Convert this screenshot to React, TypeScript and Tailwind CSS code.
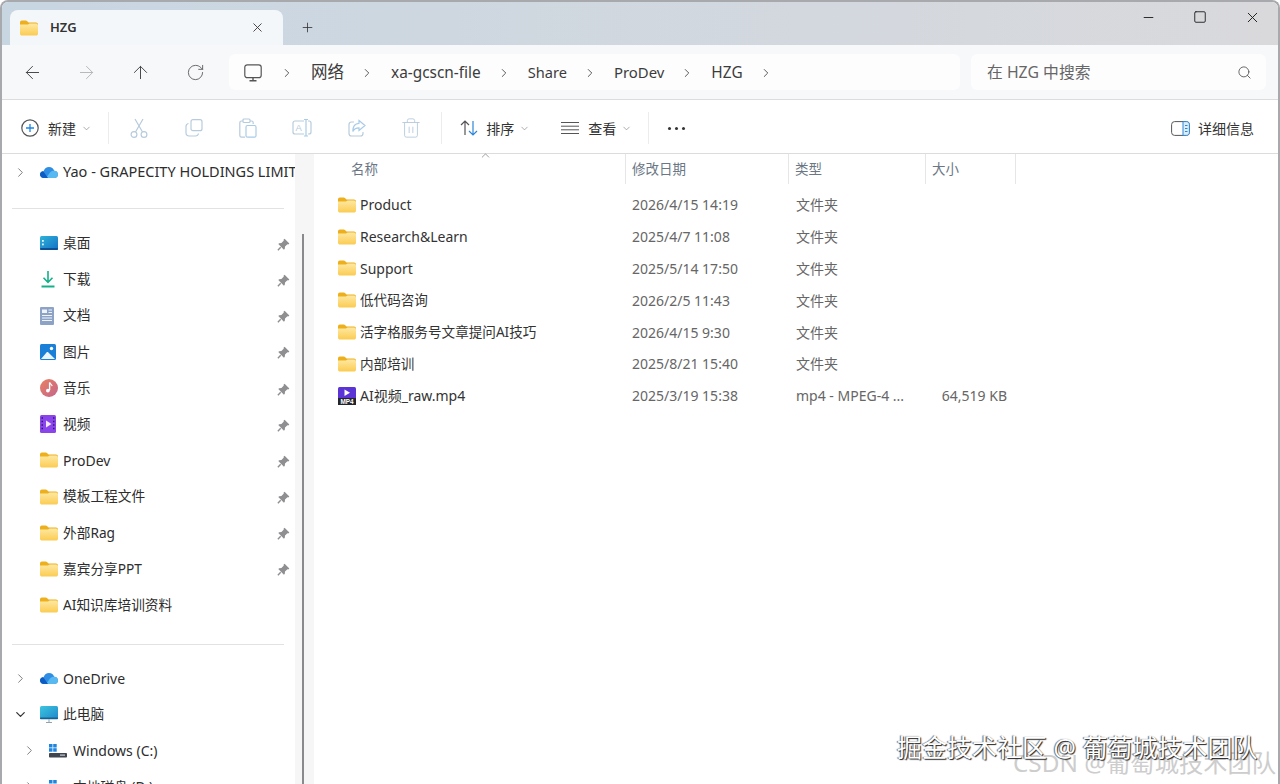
import { ArrowLeft, ArrowRight, ArrowUp, ChevronDown, ChevronRight, ChevronUp, Minus, Plus, RotateCw, Search, Square, Trash2, X } from "lucide-react"

const font = { fontFamily: '"Noto Sans", "Noto Sans CJK SC", sans-serif' }

function Folder({ className = "w-[18px] h-[16px]" }: { className?: string }) {
  return (
    <svg viewBox="0 0 18 16" className={className}>
      <defs>
        <linearGradient id="fold" x1="0" y1="0" x2="0" y2="1">
          <stop offset="0" stopColor="#fee9a4" />
          <stop offset="1" stopColor="#fbcb50" />
        </linearGradient>
      </defs>
      <path d="M0 2.500C0 1.400.8.600 1.800.600h4c.6 0 1 .2 1.400.6L8.600 2.600H16c1.100 0 2 .9 2 2V6H0z" fill="#edb01c" />
      <path d="M0 4.600h7.200c.5 0 .8-.1 1.200-.4L9.600 3.400H16c1.100 0 2 .9 2 2v8.400c0 1.100-.9 1.800-2 1.800H2c-1.100 0-2-.7-2-1.800z" fill="url(#fold)" />
    </svg>
  )
}

function Cloud() {
  return (
    <svg viewBox="0 0 18 12" className="w-[18px] h-[12px]">
      <path d="M4 12C1.500 12 0 10.400 0 8.500S1.500 5.200 3.500 5.200C4.500 2.500 6.500 1 9 1c2.700 0 4.500 1.500 5.200 3.800 2.200.1 3.800 1.600 3.800 3.600S16.500 12 14.500 12z" fill="#2f8de4" />
      <path d="M6 12 10 6.500c1-1.200 2.500-1.900 4.200-1.700 2.200.1 3.800 1.600 3.800 3.600S16.500 12 14.500 12z" fill="#58b8f0" />
      <path d="M0 8.500C0 10.400 1.500 12 4 12h4L4 6.200c-.6-.6-1-1-1-1C1.200 5.400 0 6.800 0 8.500z" fill="#0c5cc4" />
    </svg>
  )
}

function Desktop() {
  return (
    <svg viewBox="0 0 18 14" className="w-[18px] h-[14px]">
      <defs>
        <linearGradient id="desk" x1="0" y1="0" x2="1" y2="1">
          <stop offset="0" stopColor="#2fb3d9" />
          <stop offset="1" stopColor="#1470c4" />
        </linearGradient>
      </defs>
      <rect width="18" height="14" rx="1.500" fill="url(#desk)" />
      <rect x="2" y="4" width="1.800" height="1.800" fill="#dff4fb" />
      <rect x="2" y="7.500" width="1.800" height="1.800" fill="#dff4fb" />
      <rect y="12" width="18" height="2" rx="1" fill="#0e4f93" />
    </svg>
  )
}

function Download() {
  return (
    <svg viewBox="0 0 16 18" className="w-[16px] h-[18px]" fill="none" stroke="#14b089" strokeWidth="1.600">
      <path d="M8 1v11M3.500 7.800 8 12.300l4.500-4.500" />
      <path d="M1.500 16.500h13" strokeWidth="2" />
    </svg>
  )
}

function Docs() {
  return (
    <svg viewBox="0 0 14 18" className="w-[14px] h-[18px]">
      <rect width="14" height="18" rx="1" fill="#8ca3c6" />
      <rect x="2" y="2.500" width="5" height="3.500" fill="#f0f4fa" />
      <path d="M8.500 3h3.500M8.500 5.500h3.500M2 8.500h10M2 11h10M2 13.500h10" stroke="#f0f4fa" strokeWidth="1.100" />
    </svg>
  )
}

function Pictures() {
  return (
    <svg viewBox="0 0 16 16" className="w-[16px] h-[16px]">
      <rect width="16" height="16" rx="1.500" fill="#1a7fd6" />
      <circle cx="11.500" cy="4.500" r="1.700" fill="#fff" />
      <path d="M1 15 6.500 8.500c.6-.6 1.300-.6 1.900 0L15 15z" fill="#eaf5fd" />
    </svg>
  )
}

function Music() {
  return (
    <svg viewBox="0 0 18 18" className="w-[18px] h-[18px]">
      <defs>
        <linearGradient id="mus" x1="0" y1="0" x2="1" y2="1">
          <stop offset="0" stopColor="#e98060" />
          <stop offset="1" stopColor="#c4668c" />
        </linearGradient>
      </defs>
      <circle cx="9" cy="9" r="9" fill="url(#mus)" />
      <path d="M9.600 3.500v7.600" stroke="#fff" strokeWidth="1.400" />
      <path d="M9.600 3.500c.5 1.700 2.400 1.800 2.500 3.600" stroke="#fff" strokeWidth="1.200" fill="none" />
      <circle cx="7.900" cy="11.600" r="1.900" fill="#fff" />
    </svg>
  )
}

function Video() {
  return (
    <svg viewBox="0 0 16 18" className="w-[16px] h-[18px]">
      <rect width="16" height="18" rx="1.500" fill="#8a45ea" />
      <path d="M6 5.500v7l5.500-3.500z" fill="#f2e8ff" />
      <path d="M1.500 3h1.500M1.500 6.500h1.500M1.500 10h1.500M1.500 13.500h1.500M13 3h1.500M13 6.500h1.500M13 10h1.500M13 13.500h1.500" stroke="#2e1a6e" strokeWidth="1.500" />
    </svg>
  )
}

function ThisPc() {
  return (
    <svg viewBox="0 0 18 17" className="w-[18px] h-[17px]">
      <defs>
        <linearGradient id="pc" x1="0" y1="0" x2="1" y2="1">
          <stop offset="0" stopColor="#3cc6de" />
          <stop offset="1" stopColor="#1f88cc" />
        </linearGradient>
      </defs>
      <rect width="18" height="13" rx="1.500" fill="url(#pc)" />
      <rect y="11.500" width="18" height="1.800" rx=".8" fill="#14628f" />
      <path d="M9 13.300v3M6 16.500h6" stroke="#8ea3b3" strokeWidth="1" />
    </svg>
  )
}

function Drive() {
  return (
    <svg viewBox="0 0 18 14" className="w-[18px] h-[14px]">
      <rect width="3.500" height="3.500" fill="#1f86e0" />
      <rect x="4.200" width="3.500" height="3.500" fill="#1f86e0" />
      <rect y="4.200" width="3.500" height="3.500" fill="#1f86e0" />
      <rect x="4.200" y="4.200" width="3.500" height="3.500" fill="#1f86e0" />
      <rect y="9" width="18" height="4.500" rx=".8" fill="#3f4650" />
      <rect x="11" y="10.500" width="5" height="1.200" fill="#c8ccd0" />
    </svg>
  )
}

function Mp4() {
  return (
    <svg viewBox="0 0 18 18" className="w-[18px] h-[18px]">
      <rect width="18" height="18" rx="1.500" fill="#5b34d6" />
      <path d="M6.500 2.500v6.500l5.500-3.250z" fill="#fff" />
      <rect y="11" width="18" height="7" fill="#23252b" />
      <text x="9" y="16.800" textAnchor="middle" fontSize="6.400" fontWeight="700" fill="#fff" fontFamily="Liberation Sans, sans-serif">MP4</text>
    </svg>
  )
}

function Pin() {
  return (
    <svg viewBox="0 0 12 12" className="w-[13px] h-[13px]">
      <path d="M7 .6 11.400 5 10.400 6 9.600 5.700 7.400 7.900 7.200 10 6.400 10.800 1.200 5.600 2 4.800 4.100 4.600 6.300 2.400 6 1.600z" fill="#8f8f92" />
      <path d="M3.400 8.600.8 11.200" stroke="#8f8f92" strokeWidth="1.300" />
    </svg>
  )
}

const pale = "#b7cbdc"

function CutIcon() {
  return (
    <svg viewBox="0 0 18 20" className="w-[18px] h-[20px]" fill="none" stroke={pale} strokeWidth="1.200">
      <circle cx="4" cy="16.500" r="2.900" />
      <circle cx="14" cy="16.500" r="2.900" />
      <path d="M5.500 14 13 1M12.500 14 5 1" />
    </svg>
  )
}

function CopyIcon() {
  return (
    <svg viewBox="0 0 18 18" className="w-[18px] h-[18px]" fill="none" stroke={pale} strokeWidth="1.200">
      <rect x="6" y=".7" width="11" height="11" rx="2" />
      <path d="M3.500 4.500C2 4.800 1 6 1 7.500v6.300C1 15.600 2.400 17 4.200 17h6.300c1.500 0 2.700-1 3-2.500" />
    </svg>
  )
}

function PasteIcon() {
  return (
    <svg viewBox="0 0 18 20" className="w-[18px] h-[20px]" fill="none" stroke={pale} strokeWidth="1.200">
      <path d="M4 3H2.500C1.500 3 .8 3.800.8 4.800v12.500c0 1 .7 1.900 1.700 1.900H6" />
      <path d="M11 3h1.500c1 0 1.700.8 1.700 1.800V6" />
      <rect x="4" y="1" width="7" height="3.500" rx="1" />
      <rect x="7" y="7.500" width="10" height="11.700" rx="1.500" stroke="#a8cbe8" />
    </svg>
  )
}

function RenameIcon() {
  return (
    <svg viewBox="0 0 20 18" className="w-[20px] h-[18px]" fill="none" stroke={pale} strokeWidth="1.200">
      <path d="M12 2H3C1.800 2 1 2.800 1 4v9c0 1.200.8 2 2 2h9" />
      <path d="M16 2h1c1.200 0 2 .8 2 2v9c0 1.200-.8 2-2 2h-1" />
      <path d="M14 .5v16.500M12 .5h4M12 17h4" stroke="#a8cbe8" />
      <text x="3.500" y="12" fontSize="9.500" fill={pale} stroke="none" fontFamily="Liberation Sans, sans-serif">A</text>
    </svg>
  )
}

function ShareIcon() {
  return (
    <svg viewBox="0 0 18 18" className="w-[18px] h-[18px]" fill="none" stroke={pale} strokeWidth="1.200">
      <path d="M6 3H3.500C2 3 1 4 1 5.500v9C1 16 2 17 3.500 17h9c1.500 0 2.500-1 2.500-2.500V13" />
      <path d="M11 1.500 17 6.500 11 11.500V8.800C8 8.800 6 10 4.800 12.500 4.800 8 7 4.500 11 4.300z" stroke="#a8cbe8" />
    </svg>
  )
}

function SortIcon() {
  return (
    <svg viewBox="0 0 18 16" className="w-[18px] h-[16px]" fill="none" strokeWidth="1.200">
      <path d="M5 15V1M1 5l4-4 4 4" stroke="#555" />
      <path d="M13 1v14M9 11l4 4 4-4" stroke="#2e86d6" />
    </svg>
  )
}

function ViewIcon() {
  return (
    <svg viewBox="0 0 18 12" className="w-[18px] h-[12px]" stroke="#555" strokeWidth="1">
      <path d="M0 .5h18M0 4.200h18M0 7.800h18M0 11.500h18" />
    </svg>
  )
}

function DetailsIcon() {
  return (
    <svg viewBox="0 0 19 15" className="w-[19px] h-[15px]" fill="none">
      <rect x=".6" y=".6" width="17.800" height="13.800" rx="3" stroke="#555" />
      <path d="M12 .6h3.400c1.700 0 3 1.300 3 3v7.800c0 1.700-1.300 3-3 3H12z" fill="#dcedfa" stroke="#2e86d6" />
      <path d="M14 4.500h2.500M14 7.500h2.500M14 10.500h2.500" stroke="#2e86d6" />
    </svg>
  )
}

function MonitorIcon() {
  return (
    <svg viewBox="0 0 18 18" className="w-[18px] h-[18px]" fill="none" stroke="#555" strokeWidth="1.200">
      <rect x=".8" y=".8" width="16.400" height="12.900" rx="2.500" />
      <path d="M9 13.700v2.800M5.500 16.800h7" strokeWidth="1.400" />
    </svg>
  )
}

function Crumb({ label, className }: { label: string; className: string }) {
  return (
    <>
      <span className={className}>{label}</span>
      <ChevronRight size={14} strokeWidth={1.500} className="text-[#444] ml-[16px] mr-[17px]" />
    </>
  )
}

function ToolBtn({ children }: { children: React.ReactNode }) {
  return <div className="w-[54.400px] flex justify-center items-center">{children}</div>
}

const hasCjk = (s: string) => /[\u4e00-\u9fff]/.test(s)

function NavRow({ icon, label, pin, chevron, down, indent }: { icon: React.ReactNode; label: string; pin?: boolean; chevron?: boolean; down?: boolean; indent?: boolean }) {
  return (
    <div className={`h-[36.200px] flex items-center text-[#2d2d2d] whitespace-nowrap overflow-hidden ${indent ? "pl-[9px]" : ""} ${hasCjk(label) ? "text-[13.700px]" : "text-[14px]"}`}>
      <div className="w-[38px] h-full flex items-center justify-center shrink-0 pr-[2px]">
        {chevron && !down && <ChevronRight size={15} strokeWidth={1.500} className="text-[#777]" />}
        {down && <ChevronDown size={15} strokeWidth={2} className="text-[#333]" />}
      </div>
      <div className={`flex justify-start shrink-0 ${indent ? "w-[24px]" : "w-[23px]"}`}>{icon}</div>
      <span className={`flex-1 overflow-hidden ${label.startsWith("Yao") ? "text-[14.500px]" : ""}`}>{label}</span>
      {pin && <div className="w-[28px] shrink-0 flex justify-start pl-[10px] pt-[2px]"><Pin /></div>}
    </div>
  )
}

const pinned: [React.ReactNode, string, boolean][] = [
  [<Desktop />, "桌面", true],
  [<Download />, "下载", true],
  [<Docs />, "文档", true],
  [<Pictures />, "图片", true],
  [<Music />, "音乐", true],
  [<Video />, "视频", true],
  [<Folder />, "ProDev", true],
  [<Folder />, "模板工程文件", true],
  [<Folder />, "外部Rag", true],
  [<Folder />, "嘉宾分享PPT", true],
  [<Folder />, "AI知识库培训资料", false],
]

const files = [
  ["Product", "2026/4/15 14:19", "文件夹", ""],
  ["Research&Learn", "2025/4/7 11:08", "文件夹", ""],
  ["Support", "2025/5/14 17:50", "文件夹", ""],
  ["低代码咨询", "2026/2/5 11:43", "文件夹", ""],
  ["活字格服务号文章提问AI技巧", "2026/4/15 9:30", "文件夹", ""],
  ["内部培训", "2025/8/21 15:40", "文件夹", ""],
  ["AI视频_raw.mp4", "2025/3/19 15:38", "mp4 - MPEG-4 ...", "64,519 KB"],
]

export default function App() {
  return (
    <div className="relative w-[1280px] h-[784px] overflow-hidden bg-white" style={font}>
      <div className="w-full h-full flex flex-col border-t-2 border-x-2 border-[#a8a9ad] rounded-t-[8px] overflow-hidden">
        {/* title bar */}
        <div className="h-[43px] shrink-0 flex bg-gradient-to-r from-[#c8d6e2] to-[#d9d9dc] pl-[8px]">
          <div className="mt-[8px] w-[273px] h-[35px] bg-[#f4f7fa] rounded-t-[8px] flex items-center pl-[10px] pr-[18px]">
            <Folder />
            <span className="ml-[12px] flex-1 text-[13px] font-semibold text-[#333]">HZG</span>
            <X size={15} strokeWidth={1.400} className="text-[#333]" />
          </div>
          <div className="ml-[17px] mt-[8px] h-[35px] flex items-center">
            <Plus size={15} strokeWidth={1.300} className="text-[#333]" />
          </div>
          <div className="flex-1" />
          <div className="flex items-center h-[30px] pr-[1px] text-[#222] ml-[-1px]">
            <div className="w-[52px] flex justify-center translate-x-[1px]"><Minus size={15} strokeWidth={1.500} /></div>
            <div className="w-[52px] flex justify-center translate-x-[1px]"><Square size={14} strokeWidth={1.600} /></div>
            <div className="w-[52px] flex justify-center translate-x-[1px]"><X size={17} strokeWidth={1.400} /></div>
          </div>
        </div>
        {/* address bar */}
        <div className="h-[55px] shrink-0 flex items-center bg-[#f6f8fa] border-b border-[#dcdcdc] pl-[3px] pr-[12px]">
          <div className="w-[54.500px] flex justify-center"><ArrowLeft size={21} strokeWidth={1.100} className="text-[#444]" /></div>
          <div className="w-[54.500px] flex justify-center"><ArrowRight size={21} strokeWidth={1.100} className="text-[#b4b6b8]" /></div>
          <div className="w-[54.500px] flex justify-center pr-[1px]"><ArrowUp size={21} strokeWidth={1.100} className="text-[#444]" /></div>
          <div className="w-[54.500px] flex justify-center"><RotateCw size={19} strokeWidth={1.100} className="text-[#555]" /></div>
          <div className="ml-[6px] w-[731px] h-[36px] pt-[1px] bg-[#fdfdfe] rounded-[6px] flex items-center pl-[15px] text-[#3c3c3c]">
            <MonitorIcon />
            <ChevronRight size={14} strokeWidth={1.500} className="text-[#444] ml-[18px] mr-[17px]" />
            <Crumb label="网络" className="text-[16.500px]" />
            <Crumb label="xa-gcscn-file" className="text-[15.400px]" />
            <Crumb label="Share" className="text-[14.600px]" />
            <Crumb label="ProDev" className="text-[14.900px]" />
            <Crumb label="HZG" className="text-[15.400px]" />
          </div>
          <div className="ml-[11px] flex-1 h-[36px] pt-[1px] bg-[#fdfdfe] rounded-[6px] flex items-center justify-between pl-[16px] pr-[14px] text-[15.800px] text-[#666]">
            <span>在 HZG 中搜索</span>
            <Search size={15} strokeWidth={1.400} className="text-[#555]" />
          </div>
        </div>
        {/* command bar */}
        <div className="h-[54px] shrink-0 flex items-center bg-white border-b border-[#dcdcdc] text-[14px] text-[#333] pl-[19px] pr-[24px] pt-[3px]">
          <svg viewBox="0 0 18 18" className="w-[18px] h-[18px]" fill="none">
            <circle cx="9" cy="9" r="8.200" stroke="#555" strokeWidth="1.200" />
            <path d="M9 5v8M5 9h8" stroke="#1f86e0" strokeWidth="1.300" />
          </svg>
          <span className="ml-[9px]">新建</span>
          <ChevronDown size={11} strokeWidth={1.500} className="ml-[5px] text-[#888]" />
          <div className="ml-[16px] w-px h-[32px] bg-[#ececec]" />
          <div className="flex ml-[3px]">
            <ToolBtn><CutIcon /></ToolBtn>
            <ToolBtn><CopyIcon /></ToolBtn>
            <ToolBtn><PasteIcon /></ToolBtn>
            <ToolBtn><RenameIcon /></ToolBtn>
            <ToolBtn><ShareIcon /></ToolBtn>
            <ToolBtn><Trash2 size={22} strokeWidth={1} className="text-[#b7cbdc]" /></ToolBtn>
          </div>
          <div className="ml-[3px] w-px h-[32px] bg-[#ececec]" />
          <div className="ml-[18px]"><SortIcon /></div>
          <span className="ml-[8px]">排序</span>
          <ChevronDown size={11} strokeWidth={1.500} className="ml-[5px] text-[#888]" />
          <div className="ml-[31px]"><ViewIcon /></div>
          <span className="ml-[9px]">查看</span>
          <ChevronDown size={11} strokeWidth={1.500} className="ml-[5px] text-[#888]" />
          <div className="ml-[16px] w-px h-[32px] bg-[#ececec]" />
          <div className="ml-[19px] flex gap-[4px]">
            <div className="w-[3px] h-[3px] rounded-full bg-[#333]" />
            <div className="w-[3px] h-[3px] rounded-full bg-[#333]" />
            <div className="w-[3px] h-[3px] rounded-full bg-[#333]" />
          </div>
          <div className="flex-1" />
          <DetailsIcon />
          <span className="ml-[8px]">详细信息</span>
        </div>
        {/* body */}
        <div className="flex-1 flex min-h-0">
          <div className="w-[293px] shrink-0 overflow-hidden">
            <NavRow chevron icon={<Cloud />} label="Yao - GRAPECITY HOLDINGS LIMITED" />
            <div className="h-[35px] flex items-center pl-[10px] pt-[2px]"><div className="w-[272px] h-px bg-[#e2e2e2]" /></div>
            {pinned.map(([icon, label, pin]) => (
              <NavRow key={label} icon={icon} label={label} pin={pin} />
            ))}
            <div className="h-[37px] flex items-center pl-[10px] pt-[5px]"><div className="w-[272px] h-px bg-[#e2e2e2]" /></div>
            <NavRow chevron icon={<Cloud />} label="OneDrive" />
            <NavRow chevron down icon={<ThisPc />} label="此电脑" />
            <NavRow chevron indent icon={<Drive />} label="Windows (C:)" />
            <NavRow chevron indent icon={<Drive />} label="本地磁盘 (D:)" />
          </div>
          <div className="w-[19px] shrink-0 bg-[#f6f6f6] pl-[7px]">
            <div className="mt-[80px] w-[2px] h-[600px] bg-[#8a8a8c]" />
          </div>
          <div className="flex-1 min-w-0">
            <div className="relative h-[35px] flex items-start text-[13.500px] text-[#6b7785]">
              <ChevronUp size={13} strokeWidth={1.300} className="absolute left-[165px] top-[-5px] text-[#777]" />
              <div className="w-[312px] h-[30px] pl-[37px] flex items-center border-r border-[#e6e6e6]">名称</div>
              <div className="w-[163px] h-[30px] pl-[6px] flex items-center border-r border-[#e6e6e6]">修改日期</div>
              <div className="w-[137px] h-[30px] pl-[6px] flex items-center border-r border-[#e6e6e6]">类型</div>
              <div className="w-[90px] h-[30px] pl-[6px] flex items-center border-r border-[#e6e6e6]">大小</div>
            </div>
            {files.map(([name, date, type, size], i) => (
              <div key={name} className="h-[31.800px] flex items-center text-[14px]">
                <div className="w-[312px] pl-[24px] flex items-center gap-[4px] text-[#333]">
                  {i === 6 ? <Mp4 /> : <Folder />}
                  <span className={hasCjk(name) && i !== 6 ? "text-[13.600px]" : ""}>{name}</span>
                </div>
                <div className="w-[163px] pl-[6px] text-[#666]">{date}</div>
                <div className="w-[137px] pl-[7px] text-[#666]">{type}</div>
                <div className="w-[81px] text-right text-[#666]">{size}</div>
              </div>
            ))}
          </div>
        </div>
      </div>
      {/* watermarks */}
      <div className="absolute left-[1013px] top-[749px] text-[24.300px] leading-[28px] text-[#cdcdcd] whitespace-nowrap">CSDN @葡萄城技术团队</div>
      <div className="absolute left-[897px] top-[732px] text-[25px] leading-[30px] text-white whitespace-nowrap [text-shadow:1px_1px_1px_#222,-1px_0_1px_#666]">掘金技术社区 @ 葡萄城技术团队</div>
    </div>
  )
}
